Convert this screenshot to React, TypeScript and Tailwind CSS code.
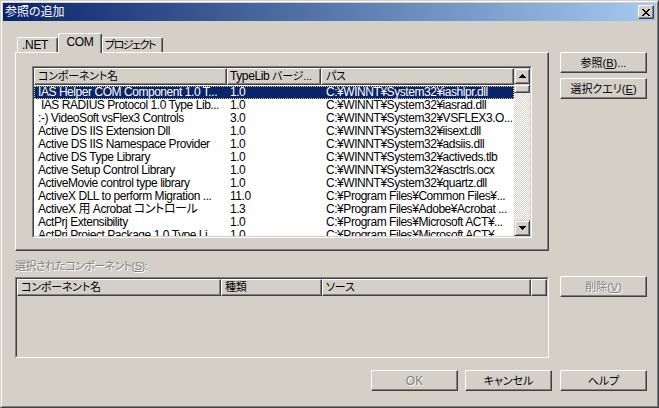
import React from "react";

type Row = [string, string, string];

const rows: Row[] = [
  ["IAS Helper COM Component 1.0 T...", "1.0", "C:¥WINNT¥System32¥iashlpr.dll"],
  [" IAS RADIUS Protocol 1.0 Type Lib...", "1.0", "C:¥WINNT¥System32¥iasrad.dll"],
  [":-) VideoSoft vsFlex3 Controls", "3.0", "C:¥WINNT¥System32¥VSFLEX3.O..."],
  ["Active DS IIS Extension Dll", "1.0", "C:¥WINNT¥System32¥iisext.dll"],
  ["Active DS IIS Namespace Provider", "1.0", "C:¥WINNT¥System32¥adsiis.dll"],
  ["Active DS Type Library", "1.0", "C:¥WINNT¥System32¥activeds.tlb"],
  ["Active Setup Control Library", "1.0", "C:¥WINNT¥System32¥asctrls.ocx"],
  ["ActiveMovie control type library", "1.0", "C:¥WINNT¥System32¥quartz.dll"],
  ["ActiveX DLL to perform Migration ...", "11.0", "C:¥Program Files¥Common Files¥..."],
  ["ActiveX 用 Acrobat コントロール", "1.3", "C:¥Program Files¥Adobe¥Acrobat ..."],
  ["ActPrj Extensibility", "1.0", "C:¥Program Files¥Microsoft ACT¥..."],
  ["ActPrj Project Package 1.0 Type Li...", "1.0", "C:¥Program Files¥Microsoft ACT¥..."],
];

function PixelIcon({ pattern, color = "#000" }: { pattern: string[]; color?: string }) {
  const w = pattern[0].length;
  const h = pattern.length;
  const rects: React.ReactNode[] = [];
  pattern.forEach((line, y) =>
    line.split("").forEach((c, x) => {
      if (c === "X") rects.push(<rect key={`${x}-${y}`} x={x} y={y} width={1} height={1} fill={color} />);
    })
  );
  return (
    <svg width={w} height={h} viewBox={`0 0 ${w} ${h}`} shapeRendering="crispEdges">
      {rects}
    </svg>
  );
}

const CLOSE = ["XX....XX", ".XX..XX.", "..XXXX..", "...XX...", "..XXXX..", ".XX..XX.", "XX....XX"];
const UP = ["...X...", "..XXX..", ".XXXXX.", "XXXXXXX"];
const DOWN = ["XXXXXXX", ".XXXXX.", "..XXX..", "...X..."];

function Btn({ children, disabled, className }: { children: React.ReactNode; disabled?: boolean; className?: string }) {
  return (
    <div
      className={`h-[21px] w-[87px] flex items-center justify-center text-[11px] tracking-[0px] leading-[14px] whitespace-nowrap border border-t-white border-l-white border-r-[#404040] border-b-[#404040] shadow-[inset_-1px_-1px_0_#808080] ${
        disabled ? "text-[#808080] [text-shadow:1px_1px_0_#ffffff]" : "text-black"
      } ${className ?? ""}`}
    >
      {children}
    </div>
  );
}

function HeaderCell({ children, className }: { children?: React.ReactNode; className?: string }) {
  return (
    <div
      className={`h-[17px] shrink-0 border border-t-white border-l-white border-r-[#404040] border-b-[#404040] shadow-[inset_-1px_-1px_0_#808080] whitespace-nowrap overflow-hidden text-[11px] tracking-[-0.2px] leading-[14px] ${className ?? ""}`}
    >
      {children}
    </div>
  );
}

function ScrollBtn({ pattern }: { pattern: string[] }) {
  return (
    <div className="h-[16px] w-[16px] shrink-0 flex items-center justify-center border border-t-[#d4d0c8] border-l-[#d4d0c8] border-r-[#404040] border-b-[#404040] shadow-[inset_1px_1px_0_#ffffff,inset_-1px_-1px_0_#808080] bg-[#d4d0c8]">
      <PixelIcon pattern={pattern} />
    </div>
  );
}

export default function App() {
  return (
    <div className="w-[659px] h-[408px] bg-[#d4d0c8] border border-t-[#d4d0c8] border-l-[#d4d0c8] border-r-[#404040] border-b-[#404040] font-['Liberation_Sans','Noto_Sans_CJK_JP',sans-serif] text-[12px] text-black [font-feature-settings:'palt'] overflow-hidden">
      <div className="h-full border border-t-white border-l-white border-r-[#808080] border-b-[#808080] p-px flex flex-col">
        {/* Title bar */}
        <div className="h-[18px] shrink-0 flex items-center justify-between bg-[linear-gradient(to_right,#0a246a,#a6caf0)] pl-[2px] pr-[2px]">
          <span className="text-white leading-[18px]">参照の追加</span>
          <div className="h-[14px] w-[16px] flex items-center justify-center border border-t-white border-l-white border-r-[#404040] border-b-[#404040] shadow-[inset_-1px_-1px_0_#808080] bg-[#d4d0c8]">
            <PixelIcon pattern={CLOSE} />
          </div>
        </div>

        {/* Body */}
        <div className="flex pl-[12px]">
          {/* Left column */}
          <div className="w-[534px] flex flex-col">
            {/* Tabs */}
            <div className="mt-[12px] h-[20px] -mb-px flex items-end pl-[2px] relative z-10 text-[11px] whitespace-nowrap">
              <div className="h-[15px] mb-px w-[41px] border border-b-0 border-t-white border-l-white border-r-[#404040] rounded-t-[2px] shadow-[inset_-1px_0_0_#808080] pl-[4px] leading-[14px] text-[12px] tracking-[-0.3px]">
                .NET
              </div>
              <div className="h-[20px] w-[44px] bg-[#d4d0c8] border border-b-0 border-t-white border-l-white border-r-[#404040] rounded-t-[2px] shadow-[inset_-1px_0_0_#808080] flex justify-center pt-[1px] leading-[14px] text-[12px] tracking-[-0.3px] relative z-10">
                COM
              </div>
              <div className="h-[15px] mb-px w-[61px] border border-b-0 border-t-white border-l-white border-r-[#404040] rounded-t-[2px] shadow-[inset_-1px_0_0_#808080] pl-[2px] leading-[14px] tracking-[-1.5px] overflow-hidden">
                プロジェクト
              </div>
            </div>
            {/* Tab panel */}
            <div className="h-[199px] border border-t-white border-l-white border-r-[#404040] border-b-[#404040] shadow-[inset_-1px_-1px_0_#808080] pl-[16px] pt-[13px]">
              {/* List view */}
              <div className="w-[500px] h-[172px] border border-t-[#808080] border-l-[#808080] border-r-white border-b-white">
                <div className="h-full border border-t-[#404040] border-l-[#404040] border-r-[#d4d0c8] border-b-[#d4d0c8] bg-white flex">
                  <div className="w-[480px] flex flex-col overflow-hidden">
                    <div className="flex bg-[#d4d0c8]">
                      <HeaderCell className="w-[193px] pl-[3px]">コンポーネント名</HeaderCell>
                      <HeaderCell className="w-[94px] pl-[2px]">
                        <span className="text-[12px] tracking-[-0.4px]">TypeLib </span>バージ...
                      </HeaderCell>
                      <HeaderCell className="w-[193px] pl-[4px]">パス</HeaderCell>
                    </div>
                    <div className="mt-px flex flex-col tracking-[-0.45px]">
                      {rows.map((r, i) => (
                        <div
                          key={i}
                          className={`h-[13px] shrink-0 flex leading-[13px] whitespace-nowrap ${
                            i === 0
                              ? "bg-[#0a246a] text-white outline outline-1 outline-dotted outline-[#d8c870] -outline-offset-1"
                              : ""
                          }`}
                        >
                          <div className="w-[193px] pl-[4px] overflow-hidden whitespace-pre">{r[0]}</div>
                          <div className="w-[94px] pl-[3px] overflow-hidden">{r[1]}</div>
                          <div className="w-[193px] pl-[5px] overflow-hidden">{r[2]}</div>
                        </div>
                      ))}
                    </div>
                  </div>
                  {/* Scrollbar */}
                  <div className="w-[16px] flex flex-col">
                    <ScrollBtn pattern={UP} />
                    <div className="h-[9px] shrink-0 border border-t-[#d4d0c8] border-l-[#d4d0c8] border-r-[#404040] border-b-[#404040] shadow-[inset_1px_1px_0_#ffffff,inset_-1px_-1px_0_#808080] bg-[#d4d0c8]" />
                    <div className="flex-1 bg-[repeating-conic-gradient(#ffffff_0%_25%,#d4d0c8_0%_50%)] bg-[length:2px_2px]" />
                    <ScrollBtn pattern={DOWN} />
                  </div>
                </div>
              </div>
            </div>

            {/* Label */}
            <div className="h-[26px] pt-[8px] leading-[14px] text-[11px] tracking-[-0.6px] text-[#808080] [text-shadow:1px_1px_0_#ffffff] whitespace-nowrap">
              選択されたコンポーネント(<span className="underline">S</span>):
            </div>

            {/* Selected list */}
            <div className="h-[81px] border border-t-[#808080] border-l-[#808080] border-r-white border-b-white">
              <div className="h-full border border-t-[#404040] border-l-[#404040] border-r-[#d4d0c8] border-b-[#d4d0c8] bg-[#d4d0c8]">
                <div className="flex">
                  <HeaderCell className="w-[204px] pl-[3px]">コンポーネント名</HeaderCell>
                  <HeaderCell className="w-[101px] pl-[3px]">種類</HeaderCell>
                  <HeaderCell className="w-[209px] pl-[3px]">ソース</HeaderCell>
                  <HeaderCell className="w-[16px]" />
                </div>
              </div>
            </div>
          </div>

          {/* Right column */}
          <div className="ml-[11px] flex flex-col">
            <Btn className="mt-[31px]">
              <span>
                参照(<span className="underline">B</span>)...
              </span>
            </Btn>
            <Btn className="mt-[5px]">
              <span>
                選択クエリ(<span className="underline">E</span>)
              </span>
            </Btn>
            <Btn disabled className="mt-[177px]">
              <span>
                削除(<span className="underline">V</span>)
              </span>
            </Btn>
          </div>
        </div>

        {/* Bottom buttons */}
        <div className="mt-[12px] flex justify-end pr-[9px]">
          <Btn disabled>
            <span className="text-[12px]">OK</span>
          </Btn>
          <Btn className="ml-[7px]">キャンセル</Btn>
          <Btn className="ml-[8px]">ヘルプ</Btn>
        </div>
      </div>
    </div>
  );
}
